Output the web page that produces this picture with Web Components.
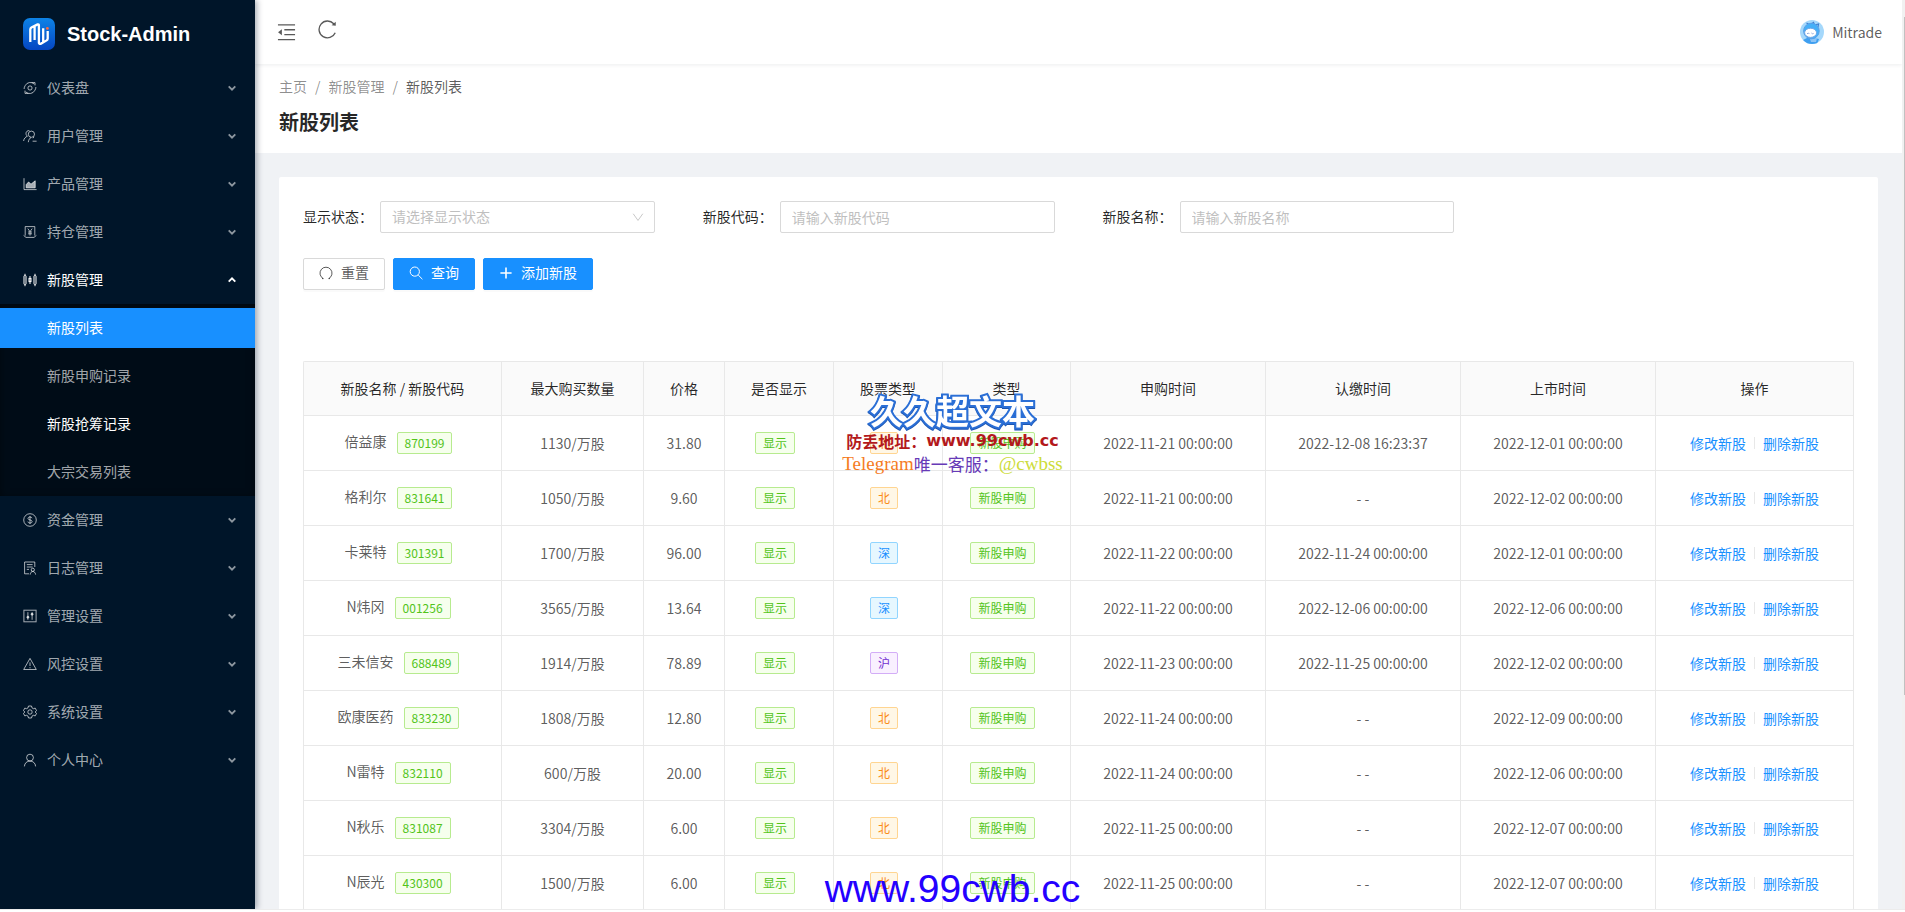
<!DOCTYPE html>
<html lang="zh-CN">
<head>
<meta charset="utf-8">
<title>Stock-Admin</title>
<style>
  html, body { margin: 0; height: 100%; overflow: hidden; background: #fff; }
  body {
    font-family: "Noto Sans CJK SC", "Noto Sans", sans-serif;
    font-size: 14px; line-height: 22px; font-weight: 400; color: rgba(0,0,0,.65);
  }
</style>
</head>
<body>
<stock-app></stock-app>
<script>
const define = (name, html, setup) => {
  const tpl = document.createElement('template');
  tpl.innerHTML = '<style>*{box-sizing:border-box}a{text-decoration:none;color:inherit}button,input,select{font:inherit;color:inherit;margin:0}</style>' + html;
  customElements.define(name, class extends HTMLElement {
    constructor() {
      super();
      this.attachShadow({ mode: 'open' }).append(tpl.content.cloneNode(true));
    }
    connectedCallback() {
      if (this.ready) return;
      this.ready = true;
      if (setup) setup.call(this, this.shadowRoot);
    }
  });
};

const icons = {
  dashboard: '<path d="M2.2 4.6A5.7 5.7 0 0 1 11.2 3M8.6 1.6H12V4.4M11.8 9.4A5.7 5.7 0 0 1 2.8 11M5.4 12.4H2V9.6M12.9 6A6 6 0 0 1 11.8 9.4M1.1 8A6 6 0 0 1 2.2 4.6"/><circle cx="7" cy="7" r="2.1"/>',
  users: '<circle cx="8.4" cy="5.2" r="3.1"/><path d="M5.3 13.2C5.6 10.6 6.8 9.1 8 8.5M11 7.8L10 9.2M9.6 12.2H13.6M6.4 1.6A2.9 2.9 0 0 0 3 4.4C3 5.9 3.6 6.6 4.4 7.2C2.4 8 .9 9.6.6 12"/>',
  area: '<path d="M1 1.2V12.6H13.6"/><path d="M3.2 10.8V7.6L5.6 5L8 7.2L12.2 3.8V10.8Z" fill="currentColor"/>',
  position: '<path d="M2.2 10.6V1.6H11.8V10.6M.6 10.4L3 12.4H11L13.4 10.4"/><path d="M4.8 3.6L7 6.6L9.2 3.6M7 6.6V10.6M5 7H9M5 8.8H9"/>',
  candles: '<rect x="1" y="2.6" width="2" height="8.8" rx=".6"/><path d="M2 .8V2.6M2 11.4V13.2M7 3V11M12 .8V2.6M12 11.4V13.2"/><rect x="6" y="5.4" width="2" height="3.2"/><rect x="11" y="2.6" width="2" height="8.8" rx=".6"/>',
  dollar: '<circle cx="7" cy="7" r="6.3"/><path d="M9 5.2C8.8 4.4 8 4 7 4C5.8 4 5 4.6 5 5.5C5 7.4 9.1 6.5 9.1 8.5C9.1 9.5 8.2 10 7 10C5.8 10 5 9.5 4.9 8.6M7 3V11"/>',
  log: '<path d="M11.8 6V1H1.6V12.8H6M3.8 3.6H9.6M3.8 6H9.6M3.8 8.4H6"/><circle cx="9.8" cy="8.8" r="1.6"/><path d="M7.2 13.6C7.4 11.6 8.4 10.5 9.8 10.5C11.2 10.5 12.4 11.6 12.6 13.6"/>',
  control: '<rect x=".9" y="1.2" width="12.2" height="11.6"/><path d="M4.9 3.2V10.8M9.1 3.2V10.8"/><circle cx="4.9" cy="8.2" r="1" fill="currentColor"/><circle cx="9.1" cy="5.2" r="1" fill="currentColor"/>',
  warning: '<path d="M7 1.4L13.3 12.5H.7Z"/><path d="M7 5.4V9M7 10.2V11.3"/>',
  setting: '<path d="M5.5 1H8.5L9 2.9L10.4 3.7L12.2 3.1L13.5 5.5L12.2 7L13.5 8.5L12.2 10.9L10.4 10.3L9 11.1L8.5 13H5.5L5 11.1L3.6 10.3L1.8 10.9L.5 8.5L1.8 7L.5 5.5L1.8 3.1L3.6 3.7L5 2.9Z"/><circle cx="7" cy="7" r="2.2"/>',
  user: '<circle cx="7" cy="4.6" r="3.4"/><path d="M1.4 13.4C1.6 10 4 8.1 7 8.1C10 8.1 12.4 10 12.6 13.4"/>',
  fold: '<path d="M.7 1.4H13.3M5.4 5H13.3M5.4 8.6H13.3M.7 12.2H13.3"/><path d="M3.6 4.6V9L.8 6.8Z" fill="currentColor" stroke="none"/>',
  reload: '<path d="M12.7 9.4A6.2 6.2 0 1 1 11.6 2.8"/><path d="M13.1 1.2V4.3L10 3.9Z" fill="currentColor" stroke="none"/>',
  undo: '<path d="M4 12.4A6 6 0 1 1 10 12.4M3 12.6H4.6M9.4 12.6H11"/>',
  search: '<circle cx="5.8" cy="5.6" r="4.6"/><path d="M9.2 9L13.4 13.2"/>',
  plus: '<path d="M7 1.4V12.6M1.4 7H12.6" stroke-width="1.6"/>',
  caret: '<path d="M2.4 4.6L7 9.2L11.6 4.6" stroke-width="2.6"/>',
  down: '<path d="M1.4 3.2L7 11L12.6 3.2"/>'
};

define('ui-icon', `
  <style>
    :host { display: inline-block; width: 14px; height: 14px; flex: none; }
    svg { display: block; width: 100%; height: 100%; fill: none; stroke: currentColor; stroke-width: 1; }
  </style>
  <svg viewBox="0 0 14 14" aria-hidden="true"></svg>`,
  function (root) { root.querySelector('svg').innerHTML = icons[this.getAttribute('name')] || ''; });

define('menu-link', `
  <style>
    :host { display: block; padding: 4px 0; color: rgba(255,255,255,.65); }
    :host([hot]) { color: #fff; }
    a { display: block; padding: 0 0 2px 47px; line-height: 38px; }
    :host([active]) { color: #fff; }
    :host([active]) a { background: #1890ff; }
  </style>
  <a href="#"><slot></slot></a>`);

define('menu-group', `
  <style>
    :host { display: block; color: rgba(255,255,255,.65); }
    :host([open]) { color: #fff; }
    button { display: flex; align-items: center; gap: 10px; width: 100%; height: 48px; padding: 0 18px 0 23px; border: 0; background: none; text-align: left; }
    span { flex: 1; padding-bottom: 2px; }
    .arrow { width: 10px; height: 10px; opacity: .85; }
    :host([open]) .arrow { transform: rotate(180deg); opacity: 1; }
    .sub { display: none; background: #000c17; box-shadow: inset 0 2px 8px rgba(0,0,0,.45); }
    :host([open]) .sub { display: block; }
  </style>
  <button type="button"><ui-icon></ui-icon><span></span><ui-icon class="arrow" name="caret"></ui-icon></button>
  <div class="sub"><slot></slot></div>`,
  function (root) {
    const icon = document.createElement('ui-icon');
    icon.setAttribute('name', this.getAttribute('icon'));
    root.querySelector('ui-icon').replaceWith(icon);
    root.querySelector('span').textContent = this.getAttribute('label');
    const button = root.querySelector('button');
    button.setAttribute('aria-expanded', this.hasAttribute('open'));
    button.onclick = () => button.setAttribute('aria-expanded', this.toggleAttribute('open'));
  });

define('side-menu', `
  <style>
    :host { display: block; width: 255px; flex: none; background: #001529; box-shadow: 2px 0 6px rgba(0,21,41,.35); position: relative; z-index: 2; }
    .brand { display: flex; align-items: center; gap: 12px; height: 64px; padding: 4px 0 0 23px; color: #fff; font: bold 20px/32px "Liberation Sans", sans-serif; }
    .brand svg { width: 32px; height: 32px; }
  </style>
  <a class="brand" href="#">
    <svg viewBox="0 0 32 32" aria-hidden="true">
      <defs><linearGradient id="g" x1="0" y1="0" x2="0" y2="1"><stop offset="0" stop-color="#0d83e6"/><stop offset="1" stop-color="#0546c2"/></linearGradient></defs>
      <rect width="32" height="32" rx="7" fill="url(#g)"/>
      <path d="M7.3 24V11.4Q7.3 10.2 8.4 9.5L14.6 6.4Q15.9 6 15.9 7.4V25Q16.2 26.4 18 25.6L23.6 22.4Q24.7 21.6 24.7 20.4V13M11.6 22V8.6M20.2 24.2V10.2" fill="none" stroke="#fff" stroke-width="2.3"/>
      <circle cx="24.4" cy="10.4" r="1.4" fill="#ff6a3a"/>
    </svg>
    <span>Stock-Admin</span>
  </a>
  <nav>
    <menu-group icon="dashboard" label="仪表盘"></menu-group>
    <menu-group icon="users" label="用户管理"></menu-group>
    <menu-group icon="area" label="产品管理"></menu-group>
    <menu-group icon="position" label="持仓管理"></menu-group>
    <menu-group icon="candles" label="新股管理" open>
      <menu-link active>新股列表</menu-link>
      <menu-link>新股申购记录</menu-link>
      <menu-link hot>新股抢筹记录</menu-link>
      <menu-link>大宗交易列表</menu-link>
    </menu-group>
    <menu-group icon="dollar" label="资金管理"></menu-group>
    <menu-group icon="log" label="日志管理"></menu-group>
    <menu-group icon="control" label="管理设置"></menu-group>
    <menu-group icon="warning" label="风控设置"></menu-group>
    <menu-group icon="setting" label="系统设置"></menu-group>
    <menu-group icon="user" label="个人中心"></menu-group>
  </nav>`);

define('top-bar', `
  <style>
    :host { display: flex; align-items: center; height: 64px; padding: 0 20px 0 22px; background: #fff; box-shadow: 0 1px 4px rgba(0,21,41,.08); position: relative; z-index: 1; }
    button { border: 0; padding: 0; background: none; display: flex; }
    .tools { display: flex; gap: 22px; flex: 1; align-items: flex-start; padding-bottom: 2px; }
    ui-icon { width: 19px; height: 19px; }
    .tools button:first-child { padding-top: 3px; }
    .user { display: flex; align-items: center; gap: 8px; }
    .user svg { width: 24px; height: 24px; }
  </style>
  <div class="tools">
    <button type="button" aria-label="收起菜单"><ui-icon name="fold"></ui-icon></button>
    <button type="button" aria-label="刷新"><ui-icon name="reload"></ui-icon></button>
  </div>
  <a class="user" href="#">
    <svg viewBox="0 0 24 24" aria-hidden="true">
      <defs><clipPath id="c"><circle cx="12" cy="12" r="12"/></clipPath></defs>
      <g clip-path="url(#c)">
        <rect width="24" height="24" fill="#a5d8fb"/>
        <path d="M3 20L9 17L19 19L17 24H5Z" fill="#3f9ff0"/>
        <path d="M10 19L17 18L16 22L11 22Z" fill="#8cc4f6"/>
        <path d="M6.5 3L10 5L13.5 2.5L14.5 5L18.5 4L18 7" fill="none" stroke="#3d7fd0" stroke-width="1.2"/>
        <circle cx="11.4" cy="11" r="7.8" fill="#45b0f8" stroke="#5a9fe6"/>
        <ellipse cx="10.6" cy="12.8" rx="6" ry="4.6" fill="#fff" stroke="#6ba4e6"/>
        <path d="M7 13.8L8.4 13L9.4 14M11.4 13L12.6 14L13.6 13" fill="none" stroke="#8aa4d8" stroke-width=".9"/>
      </g>
    </svg>
    <span>Mitrade</span>
  </a>`);

define('page-head', `
  <style>
    :host { display: block; padding: 11px 24px 15px; background: #fff; }
    ol { display: flex; gap: 8px; margin: 0; padding: 0; list-style: none; color: rgba(0,0,0,.45); }
    li { display: flex; gap: 8px; }
    li + li::before { content: "/"; }
    [aria-current] { color: rgba(0,0,0,.65); }
    h1 { margin: 9px 0 0; font-size: 20px; line-height: 32px; font-weight: 700; color: rgba(0,0,0,.85); }
  </style>
  <nav><ol><li><a href="#">主页</a></li><li><a href="#">新股管理</a></li><li><span aria-current="page">新股列表</span></li></ol></nav>
  <h1>新股列表</h1>`);

define('form-field', `
  <style>
    :host { display: flex; align-items: center; }
    label { width: 77px; flex: none; padding-bottom: 2px; color: rgba(0,0,0,.85); }
    .box { flex: 1; min-width: 0; display: grid; align-items: center; }
    .box > * { grid-area: 1 / 1; }
    input, select { width: 100%; height: 32px; padding: 0 11px; border: 1px solid #d9d9d9; border-radius: 2px; background: #fff; appearance: none; outline: 0; }
    select { padding-bottom: 2px; }
    select, ::placeholder { color: #bfbfbf; opacity: 1; }
    ui-icon { width: 12px; height: 12px; justify-self: end; margin-right: 11px; color: #bfbfbf; pointer-events: none; }
  </style>
  <label for="f"></label><div class="box"></div>`,
  function (root) {
    const hint = this.getAttribute('hint');
    root.querySelector('label').textContent = this.getAttribute('label') + '：';
    root.querySelector('.box').innerHTML = this.hasAttribute('choice')
      ? `<select id="f"><option>${hint}</option><option>显示</option><option>隐藏</option></select><ui-icon name="down"></ui-icon>`
      : `<input id="f" type="text" placeholder="${hint}">`;
  });

define('ui-button', `
  <style>
    :host { display: block; }
    button { display: flex; align-items: center; gap: 8px; height: 32px; padding: 0 15px 4px; border: 1px solid #d9d9d9; border-radius: 2px; background: #fff; box-shadow: 0 2px 0 rgba(0,0,0,.02); }
    ::slotted(ui-icon) { margin-top: 1px; }
    :host([primary]) button { color: #fff; background: #1890ff; border-color: #1890ff; }
  </style>
  <button type="button"><slot name="icon"></slot><slot></slot></button>`);

define('search-form', `
  <style>
    :host { display: grid; gap: 25px; }
    .fields { display: grid; grid-template-columns: repeat(4, 1fr); gap: 48px; }
    .actions { display: flex; gap: 8px; }
  </style>
  <div class="fields">
    <form-field label="显示状态" hint="请选择显示状态" choice></form-field>
    <form-field label="新股代码" hint="请输入新股代码"></form-field>
    <form-field label="新股名称" hint="请输入新股名称"></form-field>
  </div>
  <div class="actions">
    <ui-button><ui-icon slot="icon" name="undo"></ui-icon>重置</ui-button>
    <ui-button primary><ui-icon slot="icon" name="search"></ui-icon>查询</ui-button>
    <ui-button primary><ui-icon slot="icon" name="plus"></ui-icon>添加新股</ui-button>
  </div>`);

define('ui-tag', `
  <style>
    :host { display: inline-block; height: 22px; margin: 0 8px 2px 0; padding: 0 7px; border: 1px solid #b7eb8f; border-radius: 2px; background: #f6ffed; color: #52c41a; font-size: 12px; line-height: 20px; vertical-align: middle; }
    :host([tone="北"]) { color: #fa8c16; background: #fff7e6; border-color: #ffd591; }
    :host([tone="深"]) { color: #1890ff; background: #e6f7ff; border-color: #91d5ff; }
    :host([tone="沪"]) { color: #722ed1; background: #f9f0ff; border-color: #d3adf7; }
  </style><slot></slot>`);

const stocks = [
  ['倍益康', '870199', '1130', '31.80', '北', '2022-11-21', '2022-12-08 16:23:37', '2022-12-01'],
  ['格利尔', '831641', '1050', '9.60', '北', '2022-11-21', '- -', '2022-12-02'],
  ['卡莱特', '301391', '1700', '96.00', '深', '2022-11-22', '2022-11-24 00:00:00', '2022-12-01'],
  ['N炜冈', '001256', '3565', '13.64', '深', '2022-11-22', '2022-12-06 00:00:00', '2022-12-06'],
  ['三未信安', '688489', '1914', '78.89', '沪', '2022-11-23', '2022-11-25 00:00:00', '2022-12-02'],
  ['欧康医药', '833230', '1808', '12.80', '北', '2022-11-24', '- -', '2022-12-09'],
  ['N雷特', '832110', '600', '20.00', '北', '2022-11-24', '- -', '2022-12-06'],
  ['N秋乐', '831087', '3304', '6.00', '北', '2022-11-25', '- -', '2022-12-07'],
  ['N辰光', '430300', '1500', '6.00', '北', '2022-11-25', '- -', '2022-12-07']
];
const columns = [['新股名称 / 新股代码', 198], ['最大购买数量', 142], ['价格', 81], ['是否显示', 109], ['股票类型', 109], ['类型', 128], ['申购时间', 195], ['认缴时间', 195], ['上市时间', 195], ['操作', 198]];

define('stock-table', `
  <style>
    :host { display: block; }
    table { width: 100%; table-layout: fixed; border-collapse: separate; border-spacing: 0; border: solid #e8e8e8; border-width: 1px 0 0 1px; border-radius: 2px 2px 0 0; }
    th, td { padding: 0; text-align: center; border: solid #e8e8e8; border-width: 0 1px 1px 0; white-space: nowrap; }
    th { height: 54px; padding-bottom: 2px; background: #fafafa; font-weight: 400; color: rgba(0,0,0,.85); }
    td { height: 55px; }
    .name { margin-right: 10px; }
    .ops { display: flex; justify-content: center; align-items: center; gap: 8px; color: #1890ff; }
    .ops i { width: 1px; height: 12px; background: #e8e8e8; }
  </style>
  <table><colgroup></colgroup><thead><tr></tr></thead><tbody></tbody></table>`,
  function (root) {
    root.querySelector('colgroup').innerHTML = columns.map(c => `<col style="width:${c[1]}px">`).join('');
    root.querySelector('thead tr').innerHTML = columns.map(c => `<th scope="col">${c[0]}</th>`).join('');
    root.querySelector('tbody').innerHTML = stocks.map(([name, code, max, price, board, apply, pay, list]) => `<tr>
      <td><span class="name">${name}</span><ui-tag>${code}</ui-tag></td><td>${max}/万股</td><td>${price}</td>
      <td><ui-tag>显示</ui-tag></td><td><ui-tag tone="${board}">${board}</ui-tag></td><td><ui-tag>新股申购</ui-tag></td>
      <td>${apply} 00:00:00</td><td>${pay}</td><td>${list} 00:00:00</td>
      <td><div class="ops"><a href="#">修改新股</a><i></i><a href="#">删除新股</a></div></td></tr>`).join('');
  });

define('site-mark', `
  <style>
    :host { position: absolute; inset: 0; z-index: 3; pointer-events: none; display: flex; flex-direction: column; align-items: center; justify-content: space-between; padding-top: 390px; }
    .mark { display: grid; justify-items: center; font-weight: 400; white-space: nowrap; }
    .title { font-size: 33px; line-height: 40px; font-weight: 700; color: #fff; -webkit-text-stroke: 4px #2b6fd6; paint-order: stroke fill; filter: drop-shadow(0 1px 0 #1c55b0); }
    .url { display: flex; align-items: center; font-size: 16px; line-height: 22px; font-weight: 700; color: #b3191c; }
    .url b { font-family: "DejaVu Sans", sans-serif; }
    .contact { display: flex; align-items: center; font-size: 17px; line-height: 24px; color: #673ab7; }
    .contact b { font: 19px/24px "Liberation Serif", serif; }
    .contact .tg { color: #f57c1f; }
    .contact .id { color: #cddc39; }
    .foot { font: 39px/46px "Liberation Sans", sans-serif; color: #2400ff; }
  </style>
  <div class="mark">
    <div class="title">久久超文本</div>
    <div class="url"><span>防丢地址：</span><b>www.99cwb.cc</b></div>
    <div class="contact"><b class="tg">Telegram</b><span>唯一客服：</span><b class="id">@cwbss</b></div>
  </div>
  <div class="foot">www.99cwb.cc</div>`);

define('stock-app', `
  <style>
    :host { display: flex; flex-direction: column; height: 100vh; position: relative; overflow: hidden; }
    .frame { display: flex; flex: 1; min-height: 0; }
    main { flex: 1; min-width: 0; overflow: hidden; background: #f0f2f5; }
    .card { margin: 24px 24px 0; padding: 24px; display: grid; gap: 71px; background: #fff; border-radius: 2px; }
    .rail { width: 3px; flex: none; padding: 17px 0 0 2px; background: #f1f1f1; }
    .thumb { height: 76%; background: #c1c1c1; }
    .edge { height: 3px; flex: none; border-top: 1px solid #ececec; background: #fff; position: relative; z-index: 2; }
  </style>
  <div class="frame">
    <side-menu></side-menu>
    <main>
      <top-bar></top-bar>
      <page-head></page-head>
      <section class="card"><search-form></search-form><stock-table></stock-table></section>
    </main>
    <div class="rail"><div class="thumb"></div></div>
  </div>
  <div class="edge"></div>
  <site-mark></site-mark>`);
</script>
</body>
</html>
